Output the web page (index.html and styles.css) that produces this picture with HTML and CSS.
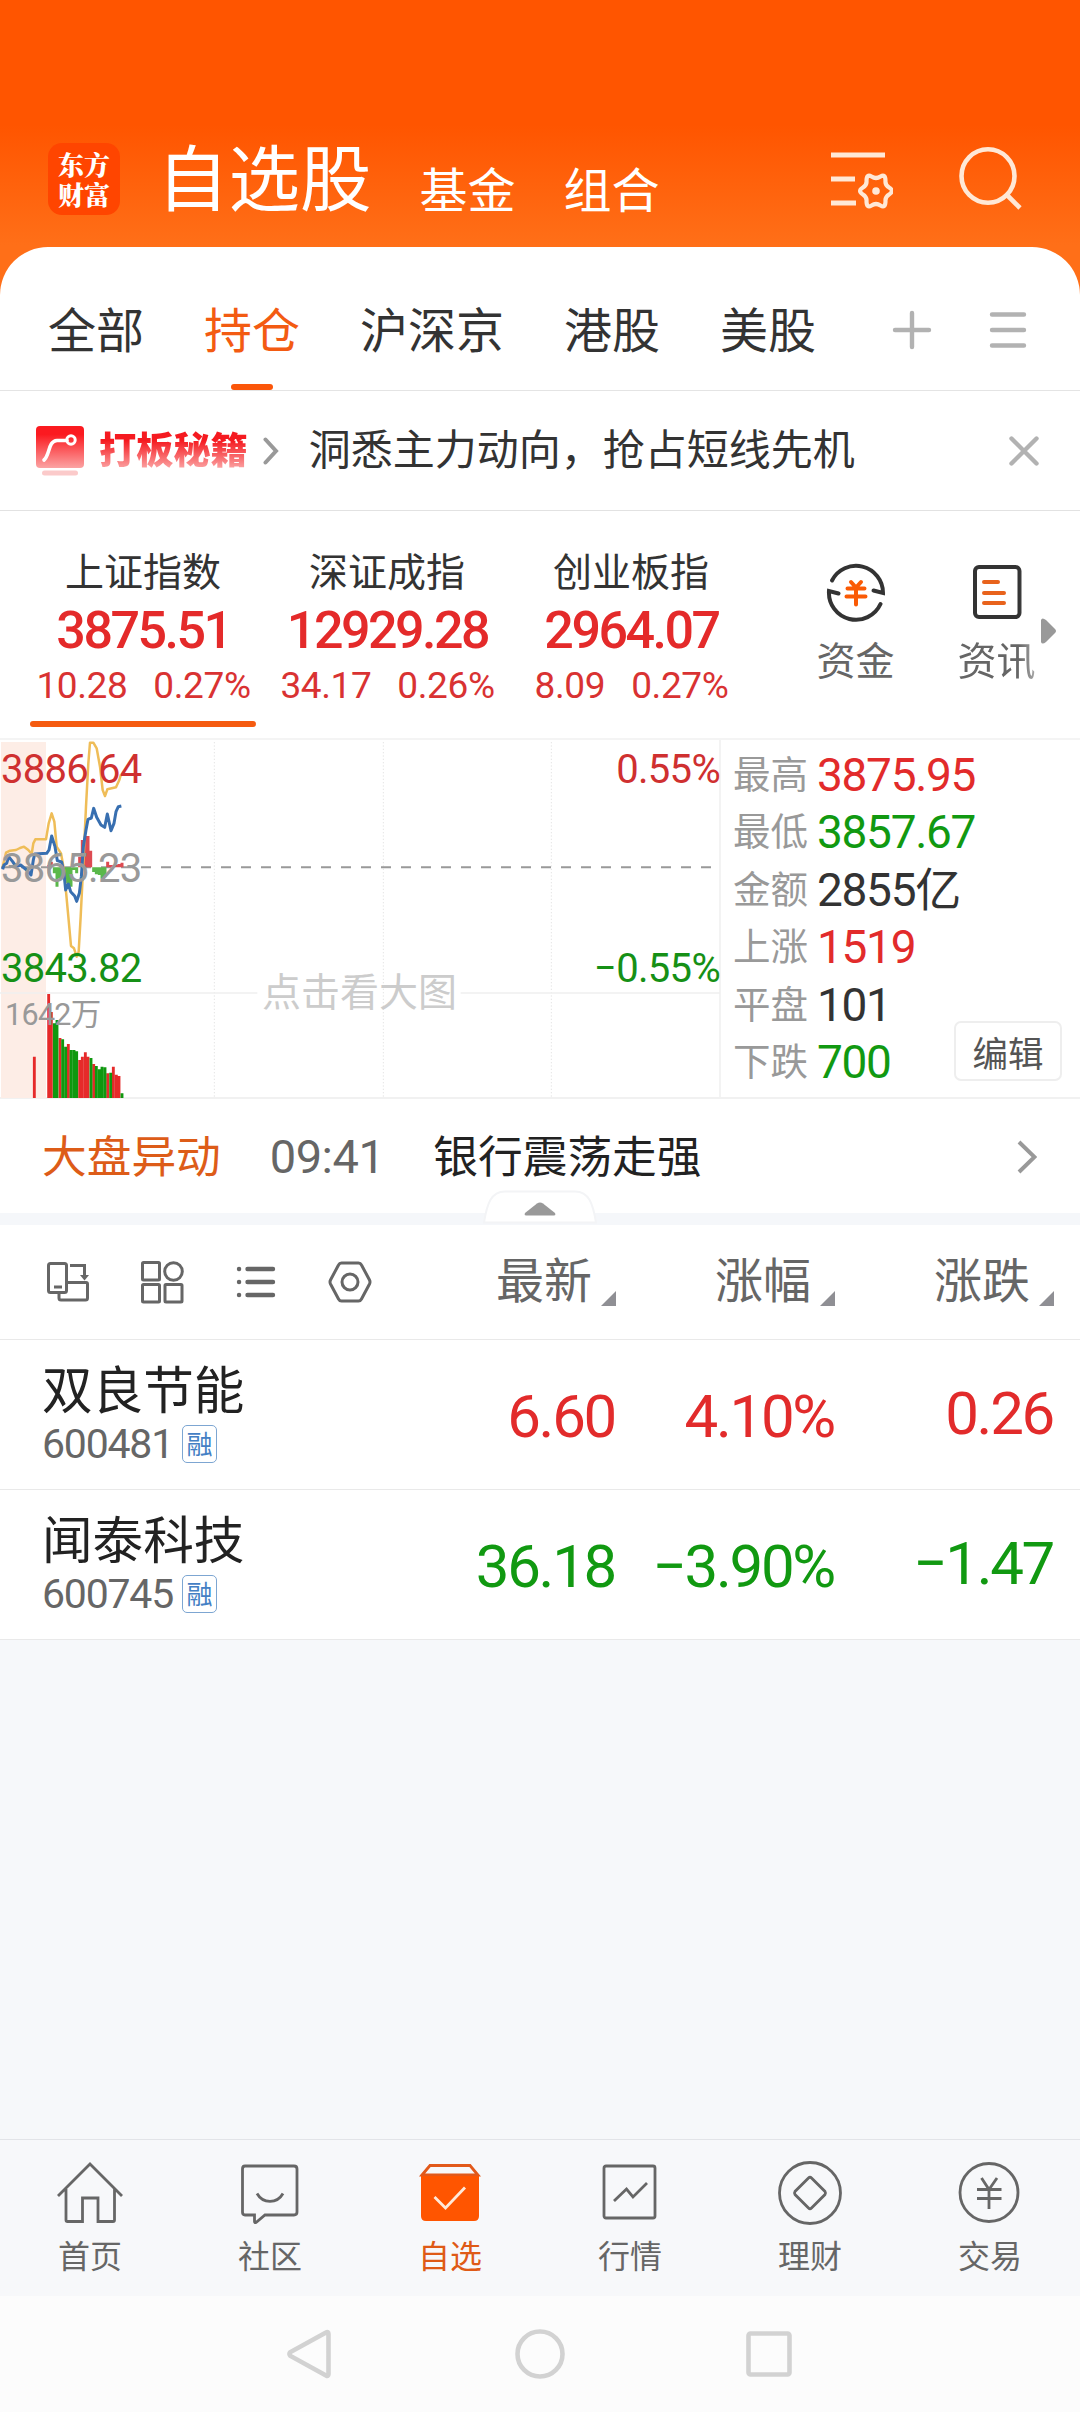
FILE: index.html
```html
<!DOCTYPE html>
<html lang="zh-CN">
<head>
  <meta charset="UTF-8">
  <meta name="viewport" content="width=device-width, initial-scale=1.0">
  <title>自选股</title>
  <link rel="stylesheet" href="styles.css">
</head>
<body>
  <header class="header">
    <div class="logo"><span>东方</span><span>财富</span></div>
    <h1 class="title">自选股</h1>
    <a class="head-link">基金</a>
    <a class="head-link">组合</a>
    <svg class="head-filter" width="64" height="64" viewBox="0 0 64 64" fill="none" stroke="currentColor" stroke-width="5">
      <path d="M2 9H56M2 33H26M2 57H27"/>
      <g transform="translate(47 45)">
        <path stroke-width="4.2" d="M13.4 3.2Q9 5.800 9.500 10Q9.500 17.500 4.500 14.500Q0 11.500 -4.500 14.500Q-9.500 17.500 -9.500 10Q-9 5.800 -13.400 3.200Q-18.500 0 -13.400 -3.200Q-9 -5.800 -9.500 -10Q-9.500 -17.500 -4.500 -14.500Q0 -11.500 4.500 -14.500Q9.500 -17.500 9.500 -10Q9 -5.800 13.400 -3.200Q18.500 0 13.400 3.200Z"/>
        <circle r="3.8" fill="currentColor" stroke="none"/>
      </g>
    </svg>
    <svg class="head-search" width="66" height="66" viewBox="0 0 66 66" fill="none" stroke="currentColor" stroke-width="4.6">
      <ellipse cx="30" cy="30" rx="26.5" ry="26.8"/>
      <path d="M49 49L62 62"/>
    </svg>
  </header>

  <main class="sheet">
    <nav class="tabs">
      <a>全部</a>
      <a class="active">持仓</a>
      <a>沪深京</a>
      <a>港股</a>
      <a>美股</a>
      <svg class="tab-add" width="40" height="40" viewBox="0 0 40 40"><path d="M3 20H37M20 3V37"/></svg>
      <svg class="tab-menu" width="40" height="40" viewBox="0 0 40 40"><path d="M4 4.5H36M4 20H36M4 35.5H36"/></svg>
    </nav>

    <section class="promo">
      <svg width="48" height="50" viewBox="0 0 48 50">
        <defs>
          <linearGradient id="promoFill" x1="0" y1="0" x2="0" y2="1">
            <stop offset=".2" stop-color="#fb1a20"/>
            <stop offset="1" stop-color="#fba3a3"/>
          </linearGradient>
        </defs>
        <rect width="48" height="42" rx="4" fill="url(#promoFill)"/>
        <rect x="6" y="44.500" width="36" height="5" rx="2.500" fill="#fbcaca"/>
        <path d="M8 34C14 29 12 15 21 14.500H31" fill="none" stroke="#fff" stroke-width="3.600" stroke-linecap="round"/>
        <circle cx="35" cy="14" r="4.200" fill="none" stroke="#fff" stroke-width="3"/>
      </svg>
      <b class="promo-name">打板秘籍</b>
      <svg class="promo-arrow" width="16" height="28" viewBox="0 0 16 28"><path d="M2.500 2.500L13 14L2.500 25.500"/></svg>
      <p class="promo-text">洞悉主力动向，抢占短线先机</p>
      <svg class="promo-close" width="30" height="30" viewBox="0 0 30 30"><path d="M2.500 2.500L27.500 27.500M27.500 2.500L2.500 27.500"/></svg>
    </section>

    <section class="indexes">
      <div class="index active">
        <h3>上证指数</h3>
        <strong>3875.51</strong>
        <p><span>10.28</span><span>0.27%</span></p>
      </div>
      <div class="index">
        <h3>深证成指</h3>
        <strong>12929.28</strong>
        <p><span>34.17</span><span>0.26%</span></p>
      </div>
      <div class="index">
        <h3>创业板指</h3>
        <strong>2964.07</strong>
        <p><span>8.09</span><span>0.27%</span></p>
      </div>
      <div class="shortcut">
        <svg width="60" height="60" viewBox="0 0 60 60" fill="none" stroke="#333" stroke-width="4" stroke-linecap="round">
          <path d="M6 18.500A27 27 0 0 1 57 31L47.500 28.500"/>
          <path d="M54.500 42A27 27 0 0 1 3 29L12.500 31.500"/>
          <path stroke="#fa5a05" d="M25 20L30 25.500L35 20M21.500 26.500H38.500M20.500 34.500H39.500M30 26V42.500"/>
        </svg>
        <span>资金</span>
      </div>
      <div class="shortcut fade">
        <svg width="60" height="60" viewBox="0 0 60 60" fill="none" stroke="#333" stroke-width="4" stroke-linecap="round">
          <rect x="8" y="5" width="44.500" height="50" rx="4"/>
          <path stroke="#e8631c" d="M17 20H31M17 31H37M17 41H37"/>
        </svg>
        <span>资讯</span>
      </div>
      <svg class="more" width="15" height="26" viewBox="0 0 15 26"><path d="M0 2Q1-1 5 2L14 11Q16 13 14 15L5 24Q1 27 0 24Z" fill="#999"/></svg>
    </section>

    <section class="market">
      <div class="chart">
        <svg width="720" height="358" viewBox="0 0 2160 1074" fill="none">
          <rect x="3" y="6" width="135" height="1068" fill="#fdede6"/>
          <path stroke="#e4e4e4" stroke-width="3" stroke-dasharray="4 6" d="M643 6V1074M1150 6V1074M1654 6V1074"/>
          <path stroke="#efefef" stroke-width="5" d="M0 759H772M1382 759H2160"/>
          <path stroke="#999" stroke-width="6" stroke-dasharray="30 30" d="M3 382H2140"/>
          <path stroke="#dd4b52" stroke-width="9" d="M146 382V375M154 382V365M239 382V350M247 382V300M256 382V288M264 382V288M272 382V332M323 382V365M332 382V375M340 382V375M349 382V374M357 382V372M366 382V368"/>
          <path stroke="#5ab84a" stroke-width="9" d="M163 382V400M171 382V440M180 382V415M188 382V410M197 382V430M205 382V440M213 382V440M222 382V390M230 382V400M281 382V396M289 382V403M298 382V405M306 382V416M315 382V410"/>
          <path stroke="#e62a2a" stroke-width="8.600" d="M103 1074V950M146 1074V762M154 1074V816M180 1074V894M205 1074V912M239 1074V960M247 1074V950M256 1074V937M264 1074V950M281 1074V972M323 1074V1000M340 1074V980M349 1074V1004M357 1074V1008"/>
          <path stroke="#0f980f" stroke-width="8.600" d="M163 1074V850M171 1074V840M188 1074V898M197 1074V920M213 1074V930M222 1074V930M230 1074V934M273 1074V954M289 1074V978M298 1074V988M306 1074V980M315 1074V982M332 1074V998M366 1074V1060"/>
          <polyline stroke="#efbd58" stroke-width="7.500" stroke-linejoin="round" points="8,380 18,338 30,332 48,330 60,324 72,320 85,330 95,342 100,310 106,298 138,298 146,250 155,220 163,245 170,320 183,340 192,390 205,530 213,618 222,625 230,650 236,635 242,530 250,370 258,200 265,70 270,8 280,8 290,25 300,80 308,150 315,168 322,148 335,145 348,142 358,120 363,103"/>
          <polyline stroke="#386fb0" stroke-width="9" stroke-linejoin="round" points="8,388 12,375 20,370 26,350 38,365 48,380 62,375 80,390 93,405 100,360 104,342 140,340 147,330 155,288 165,320 172,362 185,366 192,400 197,450 205,432 212,455 224,468 230,484 238,460 244,410 250,320 258,270 264,238 274,234 281,205 290,232 303,255 314,262 322,222 333,272 342,250 348,215 355,200 364,198"/>
        </svg>
        <span class="mark high red">3886.64</span>
        <span class="mark mid">3865.23</span>
        <span class="mark low green">3843.82</span>
        <span class="mark high right red">0.55%</span>
        <span class="mark low right green">−0.55%</span>
        <span class="mark volume">1642万</span>
        <span class="hint">点击看大图</span>
      </div>
      <dl class="stats">
        <dt>最高</dt><dd class="red">3875.95</dd>
        <dt>最低</dt><dd class="green">3857.67</dd>
        <dt>金额</dt><dd>2855亿</dd>
        <dt>上涨</dt><dd class="red">1519</dd>
        <dt>平盘</dt><dd>101</dd>
        <dt>下跌</dt><dd class="green">700</dd>
      </dl>
      <button class="edit">编辑</button>
    </section>

    <section class="news">
      <b>大盘异动</b>
      <time>09:41</time>
      <p>银行震荡走强</p>
      <svg width="20" height="34" viewBox="0 0 20 34"><path d="M2 2L17.500 17L2 32"/></svg>
      <svg class="fold" width="114" height="34" viewBox="0 0 114 34">
        <path d="M1 32.500C4 14 8 1.500 22 1.500H92C106 1.500 110 14 113 32.500Z" fill="#fff" stroke="#f3f4f6" stroke-width="2"/>
        <path d="M42 23L54 13.500Q57 11.500 60 13.500L72 23Q73 25.500 71 25.500H43Q41 25.500 42 23Z" fill="#999"/>
      </svg>
    </section>

    <section class="stocks">
      <div class="row head">
        <div class="tools">
          <svg width="44" height="44" viewBox="0 0 44 44">
            <rect x="2.500" y="3.500" width="18" height="29" rx="2"/>
            <path d="M8 27H16M21 22.500H40Q41.500 22.500 41.500 24V38Q41.500 40 39.500 40H15Q13 40 13 38V33M24 5.500H38.500V18"/>
            <path d="M34 15H43L38.500 20.500Z" fill="#666" stroke="none"/>
          </svg>
          <svg width="44" height="44" viewBox="0 0 44 44">
            <rect x="2.500" y="2.500" width="17" height="17.500" rx="1"/>
            <circle cx="33.500" cy="11.500" r="8.800"/>
            <rect x="2.500" y="24.500" width="17" height="17.500" rx="1"/>
            <rect x="25" y="24.500" width="17" height="17.500" rx="1"/>
          </svg>
          <svg width="44" height="44" viewBox="0 0 44 44">
            <path stroke-width="4.400" stroke-linecap="round" d="M13.500 9H39M13.500 22H39M13.500 35H39M5 9H5.100M5 22H5.100M5 35H5.100"/>
          </svg>
          <svg width="44" height="44" viewBox="0 0 44 44">
            <path d="M13.500 3H30.500Q32.500 3 33.500 5L41.500 20Q42.500 22 41.500 24L33.500 39Q32.500 41 30.500 41H13.500Q11.500 41 10.500 39L2.500 24Q1.500 22 2.500 20L10.500 5Q11.500 3 13.500 3Z"/>
            <circle cx="22" cy="22" r="8"/>
          </svg>
        </div>
        <span class="sort">最新</span>
        <span class="sort">涨幅</span>
        <span class="sort">涨跌</span>
      </div>
      <div class="row">
        <div class="stock">
          <h2>双良节能</h2>
          <p>600481<i>融</i></p>
        </div>
        <span class="cell red">6.60</span>
        <span class="cell red">4.10%</span>
        <span class="cell last red">0.26</span>
      </div>
      <div class="row">
        <div class="stock">
          <h2>闻泰科技</h2>
          <p>600745<i>融</i></p>
        </div>
        <span class="cell green">36.18</span>
        <span class="cell green">−3.90%</span>
        <span class="cell last green">−1.47</span>
      </div>
    </section>
  </main>

  <footer class="tabbar">
    <a>
      <svg width="68" height="68" viewBox="0 0 68 68"><path d="M2 37L34 5L66 37M10 30V61Q10 62.500 11.500 62.500H26.500V39H42V62.500H57Q58.500 62.500 58.500 61V30"/></svg>
      首页
    </a>
    <a>
      <svg width="68" height="68" viewBox="0 0 68 68"><path d="M9 7H58Q61 7 61 10V53Q61 56 58 56H29L20 63.500Q18.500 64 18.500 62.500V56H9Q6.500 56 6.500 53V10Q6.500 7 9 7Z"/><path d="M21 34.500C27 45 41 45 47 34.500"/></svg>
      社区
    </a>
    <a class="active">
      <svg width="68" height="68" viewBox="0 0 68 68"><path d="M6 16L14 6.500H54L62 16Z"/><path d="M5 17H63V57Q63 62 58 62H10Q5 62 5 57Z" fill="#ff5500" stroke="none"/><path stroke="#ffe9d8" d="M18.500 38L29.500 49L49 28.500"/></svg>
      自选
    </a>
    <a>
      <svg width="68" height="68" viewBox="0 0 68 68"><rect x="8" y="7" width="51" height="52" rx="2"/><path d="M18 42L30.500 30L37 38L51 24"/></svg>
      行情
    </a>
    <a>
      <svg width="68" height="68" viewBox="0 0 68 68"><circle cx="34" cy="34" r="30.500"/><path d="M32.500 19Q34 17.500 35.500 19L49 32.500Q50 34 49 35.500L35.500 49Q34 50.500 32.500 49L19 35.500Q18 34 19 32.500Z"/></svg>
      理财
    </a>
    <a>
      <svg width="68" height="68" viewBox="0 0 68 68"><circle cx="33" cy="33.500" r="29"/><path d="M25.500 19L33 30.500L41 19M21 30.500H45.500M21 39.500H45.500M33 30V50"/></svg>
      交易
    </a>
  </footer>

  <div class="sysnav">
    <svg width="56" height="56" viewBox="0 0 56 56"><path d="M45 6.500Q47.500 5 47.500 8V48Q47.500 51 45 49.500L9.500 30Q7.500 28 9.500 26Z"/></svg>
    <svg width="56" height="56" viewBox="0 0 56 56"><circle cx="29" cy="28" r="22.500"/></svg>
    <svg width="56" height="56" viewBox="0 0 56 56"><rect x="7.500" y="7.500" width="41" height="41" rx="2"/></svg>
  </div>
</body>
</html>
```

FILE: styles.css
```css
* {
  margin: 0;
  padding: 0;
  box-sizing: border-box;
}

body {
  width: 1080px;
  height: 2412px;
  display: flex;
  flex-direction: column;
  background: #f6f8fa;
  color: #333;
  font-family: "Noto Sans CJK SC", sans-serif;
  font-weight: 400;
  overflow: hidden;
}

svg {
  display: block;
  flex: none;
}

.red { color: #e22b2b; }
.green { color: #119911; }

/* header */
.header {
  height: 295px;
  padding: 143px 0 0 48px;
  display: flex;
  align-items: flex-start;
  background: linear-gradient(#ff5500 125px, #ff6f18 245px);
  color: #fff;
}

.logo {
  width: 72px;
  height: 72px;
  border-radius: 14px;
  background: #ff4500;
  display: flex;
  flex-direction: column;
  align-items: center;
  justify-content: center;
  font: 900 26px/30px "Noto Serif CJK SC", "Noto Sans CJK SC", serif;
}

.title {
  margin: -5px 0 0 37px;
  font-size: 71.5px;
  line-height: 72px;
  font-weight: 400;
}

.head-link {
  margin: 14px 0 0 48px;
  font-size: 48px;
  line-height: 60px;
}

.head-filter {
  margin: 3px 0 0 169px;
  color: #ffe8d6;
}

.head-search {
  margin: 3px 0 0 65px;
  color: #ffe8d6;
}

/* white sheet */
.sheet {
  margin-top: -48px;
  background: #fff;
  border-radius: 48px 48px 0 0;
  flex: none;
}

.tabs {
  height: 144px;
  padding: 22px 50px 0 48px;
  display: flex;
  align-items: center;
  gap: 60px;
  border-bottom: 1px solid #e4e4e4;
  font-size: 48px;
  line-height: 72px;
}

.tabs a {
  position: relative;
  margin-top: -5px;
}

.tabs .active {
  color: #f35b12;
}

.tabs .active::after {
  content: "";
  position: absolute;
  left: 27px;
  bottom: -27px;
  width: 42px;
  height: 6px;
  border-radius: 3px;
  background: #fb560a;
}

.tabs svg {
  fill: none;
  stroke: #b2b2b2;
  stroke-width: 4.4;
  stroke-linecap: round;
}

.tab-add { margin-left: 16px; }
.tab-menu { margin-left: -4px; }

.promo {
  height: 120px;
  padding: 0 41px 0 36px;
  display: flex;
  align-items: center;
  border-bottom: 1px solid #e2e2e2;
}

.promo svg {
  fill: none;
}

.promo-name {
  margin: -5px 0 0 15px;
  font-size: 37.2px;
  line-height: 50px;
  font-weight: 900;
  background: linear-gradient(#f51a20 35%, #fba0a0 90%);
  -webkit-background-clip: text;
  background-clip: text;
  color: transparent;
}

.promo-arrow {
  margin-left: 15px;
  stroke: #999;
  stroke-width: 4;
  stroke-linecap: round;
}

.promo-text {
  margin: -7px auto 0 30px;
  font-size: 42px;
  line-height: 60px;
}

.promo-close {
  stroke: #b2b2b2;
  stroke-width: 4.4;
  stroke-linecap: round;
}

/* index cards */
.indexes {
  position: relative;
  height: 229px;
  padding-left: 21px;
  display: flex;
  border-bottom: 2px solid #f4f4f4;
}

.index {
  width: 244px;
  padding-top: 34px;
  display: flex;
  flex-direction: column;
  align-items: center;
  position: relative;
}

.index h3 {
  font-size: 39px;
  line-height: 48px;
  font-weight: 400;
}

.index strong {
  font: 500 52px/58px Roboto, sans-serif;
  letter-spacing: -2.5px;
  margin: 9px 0 0 1px;
  color: #e42a2a;
}

.index p {
  display: flex;
  gap: 26px;
  font: 400 37px/48px Roboto, sans-serif;
  letter-spacing: -.4px;
  margin: 2px 0 0 1px;
  color: #d93232;
}

.index.active::after {
  content: "";
  position: absolute;
  left: 9px;
  bottom: 11px;
  width: 226px;
  height: 6px;
  border-radius: 3px;
  background: #f55b10;
}

.shortcut {
  width: 141px;
  padding-top: 51px;
  display: flex;
  flex-direction: column;
  align-items: center;
  gap: 8px;
  color: #666;
  font-size: 39px;
  line-height: 56px;
}

.indexes .index + .shortcut {
  margin-left: 32px;
}

.fade {
  -webkit-mask-image: linear-gradient(90deg, #000 66%, #0006 82%);
  mask-image: linear-gradient(90deg, #000 66%, #0006 82%);
}

.more {
  position: absolute;
  left: 1041px;
  top: 107px;
}

/* intraday chart */
.market {
  position: relative;
  display: flex;
  height: 359px;
  border-bottom: 2px solid #f1f1f1;
}

.chart {
  position: relative;
  width: 721px;
  border-right: 2px solid #f3f3f3;
}

.mark {
  position: absolute;
  left: 1px;
  font: 400 40px/48px Roboto, "Noto Sans CJK SC", sans-serif;
  letter-spacing: -.7px;
  color: #999;
}

.mark.red { color: #cf3030; }
.mark.green { color: #169016; }
.mark.high { top: 6px; }
.mark.mid { top: 105px; }
.mark.low { top: 205px; }

.mark.right {
  left: auto;
  right: -1px;
  letter-spacing: -.7px;
}

.mark.volume {
  left: 5px;
  top: 251px;
  font-size: 30.5px;
}

.hint {
  position: absolute;
  left: 262px;
  top: 221px;
  font-size: 39px;
  line-height: 56px;
  color: #ccc;
}

.stats {
  padding: 7px 0 0 12px;
  display: grid;
  grid-template-columns: 84px auto;
  grid-auto-rows: 57.4px;
  align-content: start;
  line-height: 57px;
}

.stats dt {
  margin-top: -4px;
  font-size: 37.5px;
  color: #999;
}

.stats dd {
  font-family: Roboto, "Noto Sans CJK SC", sans-serif;
  font-size: 46px;
  letter-spacing: -1.3px;
}

.edit {
  position: absolute;
  right: 18px;
  bottom: 16px;
  width: 108px;
  height: 60px;
  border: 2px solid #eee;
  border-radius: 7px;
  background: #fff;
  color: #555;
  font: 400 35.5px/51px "Noto Sans CJK SC", sans-serif;
}

.news {
  position: relative;
  height: 126px;
  padding: 1px 43px 0 42px;
  border-bottom: 12px solid #f5f7fa;
  display: flex;
  align-items: center;
  font-size: 44.7px;
  line-height: 64px;
  color: #222;
}

.news b {
  margin-top: -5px;
  font-weight: 400;
  color: #dd5c18;
}

.news time {
  margin-left: 49px;
  font-family: Roboto, sans-serif;
  font-size: 47px;
  letter-spacing: -.5px;
  color: #666;
}

.news p {
  margin: -5px auto 0 49px;
}

.news svg {
  fill: none;
  stroke: #999;
  stroke-width: 4;
}

.news .fold {
  position: absolute;
  left: 483px;
  bottom: -11px;
  stroke: none;
}

/* watch list */
.row {
  height: 150px;
  padding-right: 26px;
  display: grid;
  grid-template-columns: 397px 219px 219px 219px;
  align-items: center;
  border-bottom: 1px solid #e9e9e9;
}

.row.head {
  height: 115px;
}

.tools {
  padding-left: 46px;
  display: flex;
  gap: 50px;
}

.tools svg {
  fill: none;
  stroke: #666;
  stroke-width: 3;
}

.sort {
  position: relative;
  margin-top: -11px;
  padding-right: 24px;
  text-align: right;
  font-size: 48px;
  line-height: 72px;
  color: #666;
}

.sort::after {
  content: "";
  position: absolute;
  right: 0;
  bottom: 7px;
  border-left: 15px solid transparent;
  border-bottom: 15px solid #8f8f94;
}

.stock {
  padding: 0 0 0 42px;
}

.stock h2 {
  margin-top: -4px;
  font-size: 50.6px;
  line-height: 56px;
  font-weight: 400;
  color: #222;
}

.stock p {
  margin-top: 7px;
  display: flex;
  align-items: center;
  gap: 9px;
  font: 400 41px/44px Roboto, sans-serif;
  letter-spacing: -1.2px;
  color: #666;
}

.stock i {
  width: 35px;
  height: 38px;
  border: 1.5px solid #7da6d2;
  border-radius: 5px;
  color: #4480c4;
  font: 400 26px/33px "Noto Sans CJK SC", sans-serif;
  letter-spacing: 0;
  text-align: center;
}

.cell {
  margin-top: 4px;
  padding-right: 1px;
  text-align: right;
  font: 400 60px/80px Roboto, sans-serif;
  letter-spacing: -2.3px;
}

.cell.last {
  margin-top: -2px;
}

/* bottom bars */
.tabbar {
  margin-top: auto;
  height: 157px;
  padding-top: 19px;
  display: grid;
  grid-template-columns: repeat(6, 180px);
  flex: none;
  background: #f7f8fa;
  border-top: 1px solid #e2e4e8;
}

.tabbar a {
  display: flex;
  flex-direction: column;
  align-items: center;
  gap: 5px;
  font-size: 32px;
  line-height: 44px;
  color: #666;
}

.tabbar svg {
  fill: none;
  stroke: #666;
  stroke-width: 2.8;
}

.tabbar .active { color: #df5a16; }
.tabbar .active svg { stroke: #e2591a; }

.sysnav {
  height: 116px;
  padding-left: 281px;
  display: flex;
  align-items: center;
  gap: 174px;
  flex: none;
  background: #fcfcfc;
}

.sysnav svg {
  fill: none;
  stroke: #d2d2d2;
  stroke-width: 4.6;
}
```
